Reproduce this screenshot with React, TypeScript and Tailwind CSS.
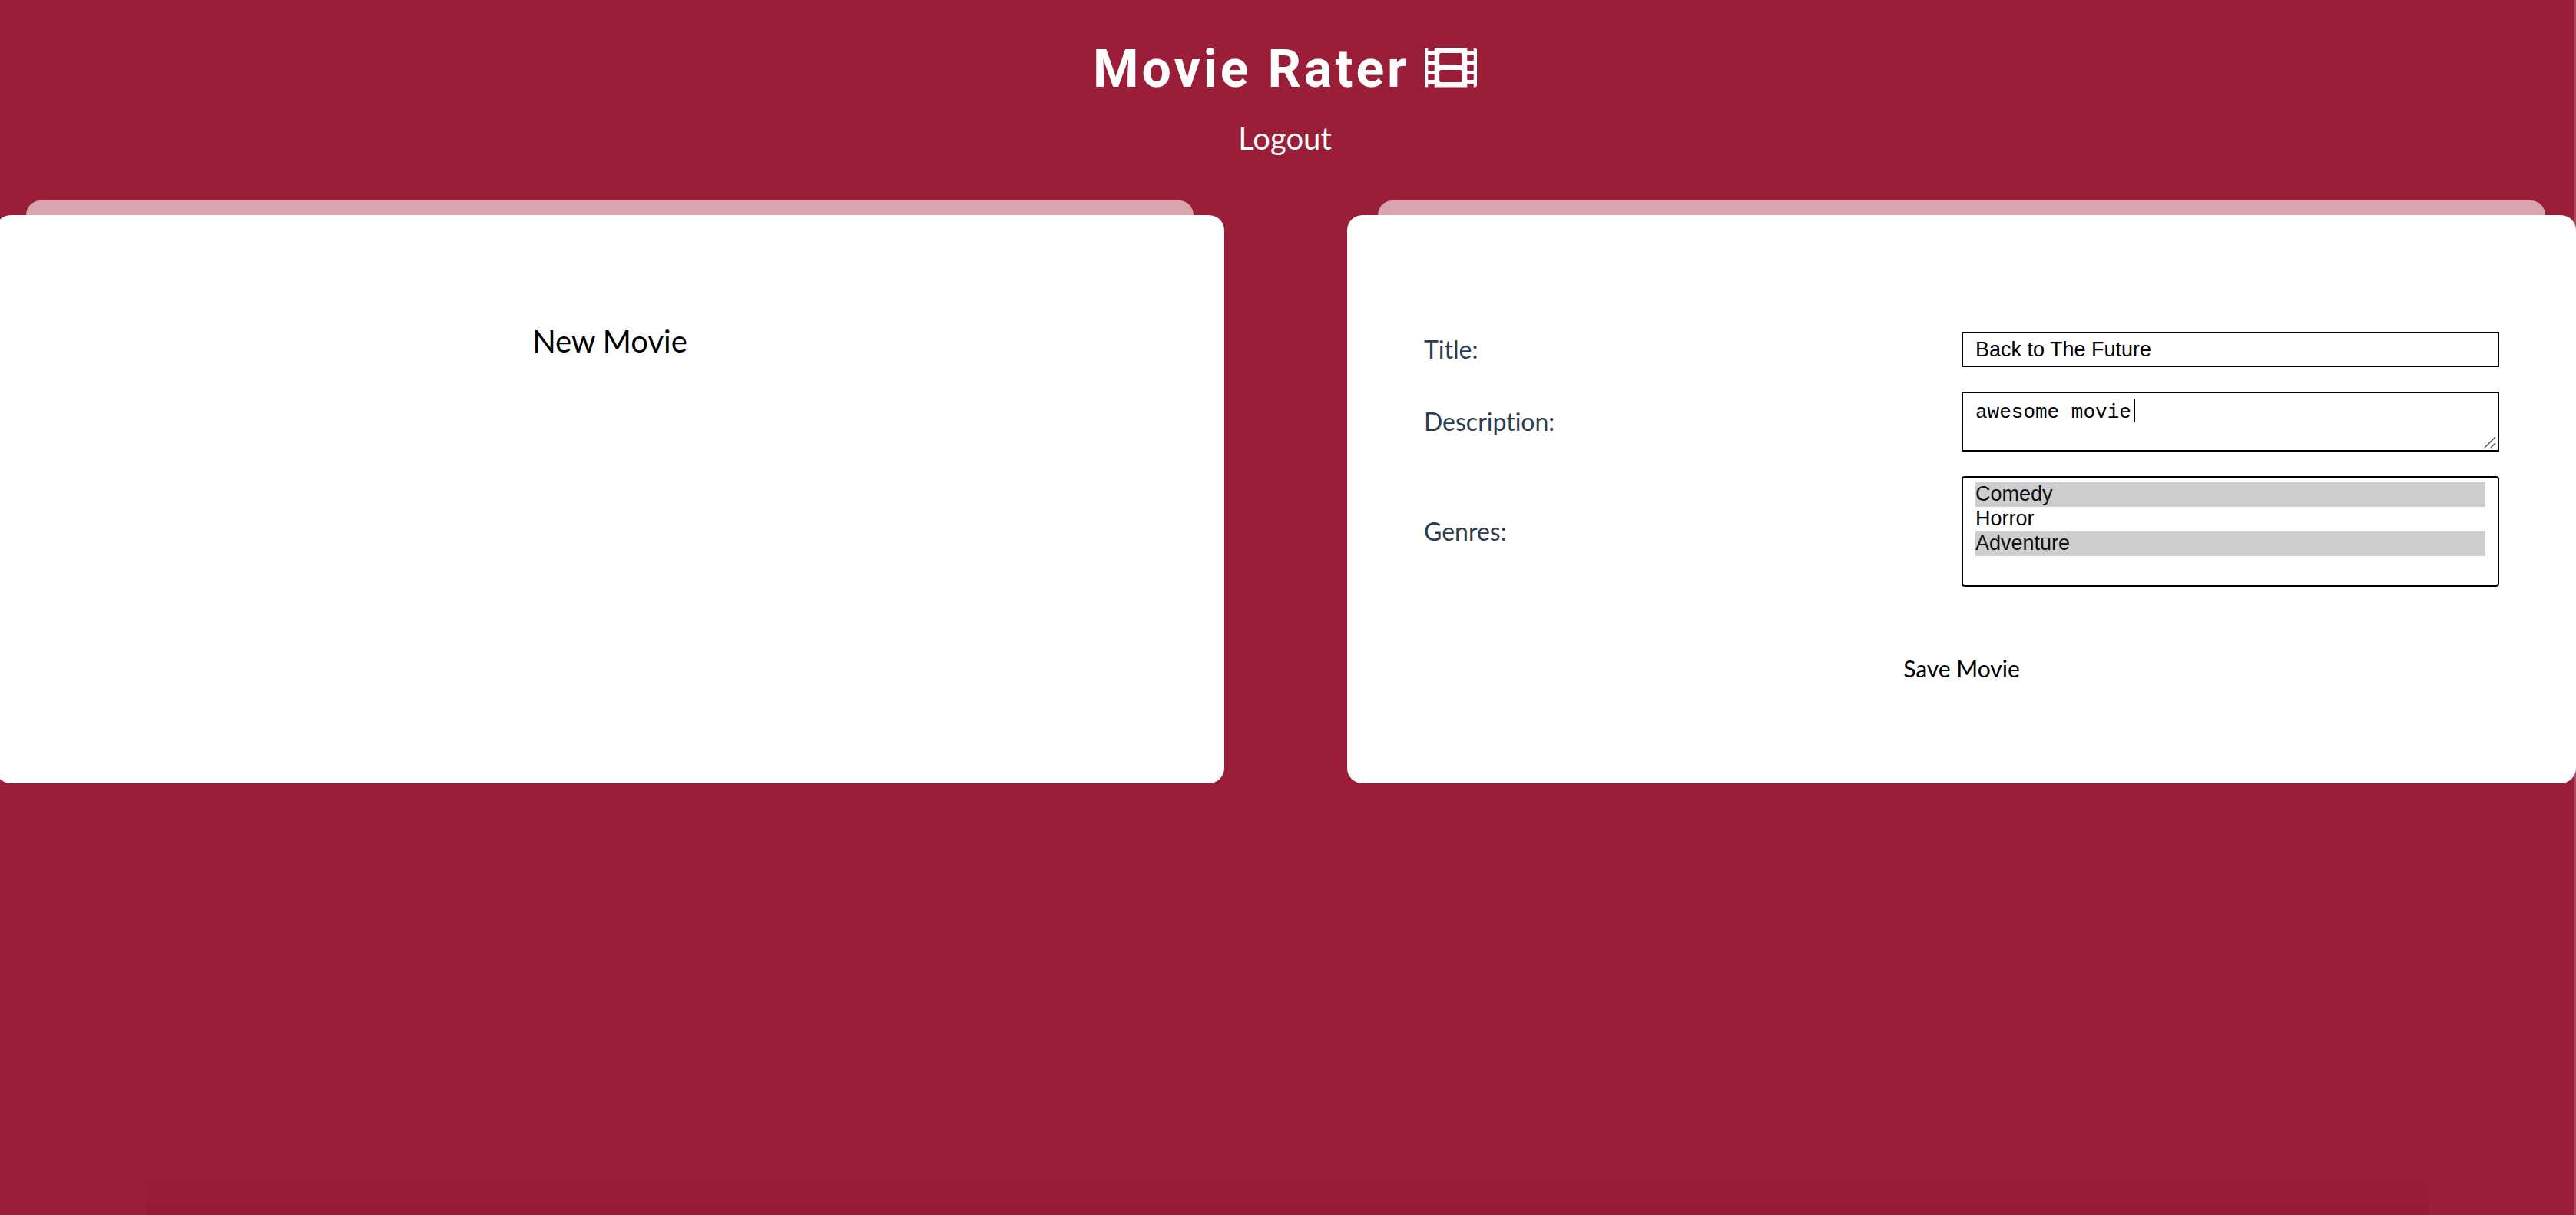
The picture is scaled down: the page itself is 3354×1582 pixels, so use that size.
import React from "react";

const GENRES = ["Comedy", "Horror", "Adventure"];

function FilmIcon() {
  return (
    <svg
      viewBox="0 0 64 52"
      preserveAspectRatio="none"
      className="mb-1 h-[52px] w-[68px]"
      fill="currentColor"
      aria-hidden="true"
    >
      <path
        fillRule="evenodd"
        d="M3 .5h1v3.500h8V0h40v4h8V.5h1a3 3 0 0 1 3 3v45a3 3 0 0 1-3 3h-1V47h-8v4.500H12V47H4v4.500H3a3 3 0 0 1-3-3v-45a3 3 0 0 1 3-3Z
        M20 7a2 2 0 0 0-2 2v12a2 2 0 0 0 2 2h24a2 2 0 0 0 2-2V9a2 2 0 0 0-2-2Z
        M20 29a2 2 0 0 0-2 2v12a2 2 0 0 0 2 2h24a2 2 0 0 0 2-2V31a2 2 0 0 0-2-2Z
        M5 9h6a1 1 0 0 1 1 1v6a1 1 0 0 1-1 1H5a1 1 0 0 1-1-1v-6a1 1 0 0 1 1-1Z
        M5 22h6a1 1 0 0 1 1 1v6a1 1 0 0 1-1 1H5a1 1 0 0 1-1-1v-6a1 1 0 0 1 1-1Z
        M5 34h6a1 1 0 0 1 1 1v6a1 1 0 0 1-1 1H5a1 1 0 0 1-1-1v-6a1 1 0 0 1 1-1Z
        M53 9h6a1 1 0 0 1 1 1v6a1 1 0 0 1-1 1h-6a1 1 0 0 1-1-1v-6a1 1 0 0 1 1-1Z
        M53 22h6a1 1 0 0 1 1 1v6a1 1 0 0 1-1 1h-6a1 1 0 0 1-1-1v-6a1 1 0 0 1 1-1Z
        M53 34h6a1 1 0 0 1 1 1v6a1 1 0 0 1-1 1h-6a1 1 0 0 1-1-1v-6a1 1 0 0 1 1-1Z"
      />
    </svg>
  );
}

function Card({ children }: { children: React.ReactNode }) {
  return (
    <section className="flex min-w-0 flex-col">
      <div className="mx-10 h-[19px] rounded-t-[20px] bg-[#d7a5af]" />
      <div className="min-h-[740px] grow rounded-[20px] bg-white px-[100px] pt-[152px] pb-20">{children}</div>
    </section>
  );
}

export default function App() {
  return (
    <div className="relative min-h-screen overflow-hidden bg-[#9a1e38] font-['Lato',sans-serif] text-[#2c3e50] before:absolute before:inset-y-0 before:right-0 before:w-0.5 before:bg-[#ab4960] after:absolute after:inset-x-48 after:bottom-0 after:h-16 after:bg-linear-to-b after:from-[#9a1e38] after:to-[#951b35]">
      <header className="flex flex-col items-center pt-12 pr-2 text-white">
        <h1 className="flex items-center gap-5 font-['Roboto',sans-serif] text-[68px] leading-[84px] font-bold tracking-[4px]">
          Movie Rater
          <FilmIcon />
        </h1>
        <button type="button" className="mt-6 text-[40px] leading-12">
          Logout
        </button>
      </header>

      <main className="relative -ml-1.5 mt-[57px] grid grid-cols-2 gap-40">
        <Card>
          <div className="-mt-3 flex justify-center">
            <button type="button" className="text-[40px] leading-12 text-black">
              New Movie
            </button>
          </div>
        </Card>

        <Card>
          <form onSubmit={(e) => e.preventDefault()}>
            <div className="grid grid-cols-2 items-center gap-y-8 text-[32px] leading-10 [font-variant-ligatures:none]">
              <label htmlFor="title">Title:</label>
              <input
                id="title"
                type="text"
                defaultValue="Back to The Future"
                className="h-[46px] w-full border-2 border-black bg-white px-4 font-['Liberation_Sans',sans-serif] text-[27px] text-black outline-none"
              />

              <label htmlFor="description">Description:</label>
              <div className="relative flex">
                <textarea
                  id="description"
                  defaultValue="awesome movie"
                  className="h-[78px] w-full resize-none border-2 border-black bg-white px-4 py-2.5 font-['Liberation_Mono',monospace] text-[26px] leading-[30px] text-black outline-none"
                />
                <span className="absolute top-2.5 left-56 h-[30px] w-0.5 bg-black" />
                <svg
                  viewBox="0 0 16 16"
                  className="absolute right-1 bottom-1 size-4"
                  stroke="#555"
                  strokeWidth="1.5"
                  aria-hidden="true"
                >
                  <path d="M1 15 15 1M9 15l6-6" />
                </svg>
              </div>

              <label htmlFor="genres">Genres:</label>
              <select
                id="genres"
                multiple
                size={4}
                defaultValue={["Comedy", "Adventure"]}
                className="h-36 w-full overflow-hidden rounded-[4px] border-2 border-black bg-white px-4 py-1.5 font-['Liberation_Sans',sans-serif] text-[27px] leading-8 text-black outline-none"
              >
                {GENRES.map((genre) => (
                  <option key={genre} className="h-8 min-h-0 p-0 leading-8">
                    {genre}
                  </option>
                ))}
              </select>
            </div>
            <div className="mt-[86px] flex justify-center">
              <button type="submit" className="text-[30px] leading-10 text-black">
                Save Movie
              </button>
            </div>
          </form>
        </Card>
      </main>
    </div>
  );
}
